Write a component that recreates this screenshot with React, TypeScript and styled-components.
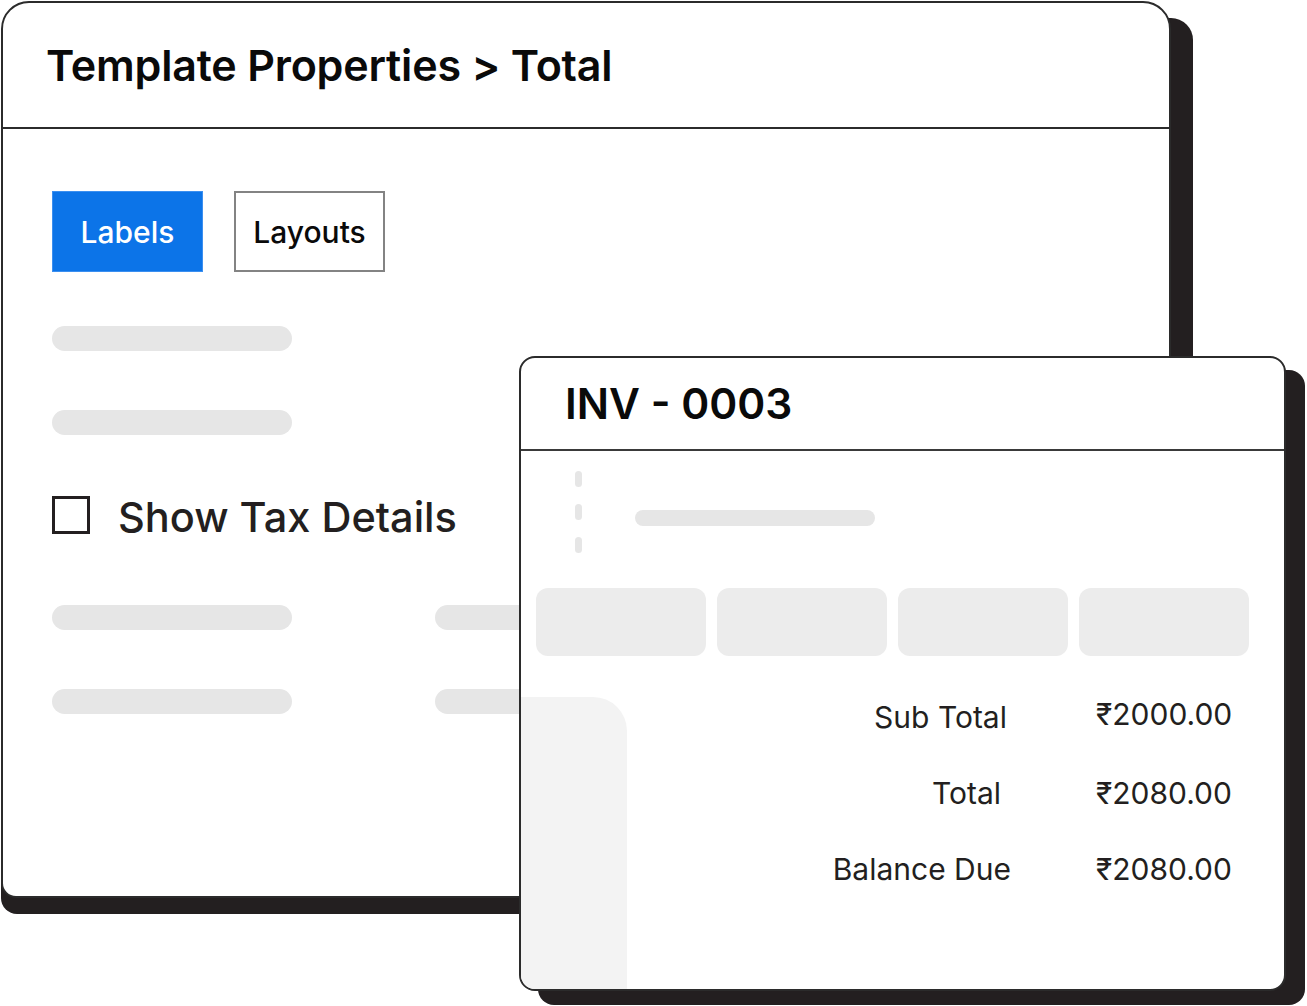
import React from 'react';
import styled, { createGlobalStyle } from 'styled-components';

const GlobalStyle = createGlobalStyle`
  html, body {
    margin: 0;
    padding: 0;
    background: #ffffff;
  }
  body {
    font-family: Inter, "Noto Sans", "DejaVu Sans", sans-serif;
    color: #231f20;
  }
  * {
    box-sizing: border-box;
  }
`;

const INK = '#231f20';

const Stage = styled.div`
  position: relative;
  z-index: 0;
  width: 1307px;
  height: 1006px;
  overflow: hidden;
`;

const BackCard = styled.section`
  position: relative;
  margin: 1px 0 0 1px;
  width: 1170px;
  height: 897px;
  display: flex;
  flex-direction: column;
  background: #ffffff;
  border: 2px solid #2b2b2b;
  border-radius: 28px 28px 15px 15px;

  /* the offset dark slab behind the card */
  &::before {
    content: '';
    position: absolute;
    left: -2px;
    top: 15px;
    right: -24px;
    bottom: -18px;
    background: ${INK};
    border-radius: 22px 22px 16px 16px;
    z-index: -1;
  }
`;

const BackHeader = styled.header`
  height: 126px;
  flex: none;
  display: flex;
  align-items: center;
  padding-left: 43px;
  border-bottom: 2px solid #2b2b2b;
`;

const BackTitle = styled.h1`
  margin: 0;
  font-size: 43px;
  font-weight: 600;
  letter-spacing: -0.2px;
  color: #0a0a0a;
`;

const BackBody = styled.div`
  display: flex;
  flex-direction: column;
  padding: 62px 0 0 49px;
`;

const Tabs = styled.div`
  display: flex;
  gap: 31px;
`;

const Tab = styled.button<{ $active?: boolean }>`
  width: 151px;
  height: 81px;
  display: flex;
  align-items: center;
  justify-content: center;
  font-family: inherit;
  font-size: 30px;
  font-weight: 500;
  background: ${(p) => (p.$active ? '#0c74e8' : '#ffffff')};
  color: ${(p) => (p.$active ? '#ffffff' : '#0a0a0a')};
  border: ${(p) => (p.$active ? '1px solid #3b8ff0' : '2px solid #838383')};
  padding: 0;
`;

const Skeleton = styled.div<{ $w: number; $h?: number; $top?: number }>`
  width: ${(p) => p.$w}px;
  height: ${(p) => p.$h ?? 25}px;
  margin-top: ${(p) => p.$top ?? 0}px;
  border-radius: 13px;
  background: #e6e6e6;
  flex: none;
`;

const SkeletonRow = styled.div<{ $top: number }>`
  display: flex;
  gap: 143px;
  margin-top: ${(p) => p.$top}px;
`;

const CheckRow = styled.label`
  display: flex;
  align-items: center;
  gap: 28px;
  margin-top: 61px;
  height: 38px;
`;

const CheckBox = styled.span`
  width: 38px;
  height: 38px;
  border: 3px solid ${INK};
  flex: none;
`;

const CheckText = styled.span`
  position: relative;
  top: 2px;
  font-size: 41.5px;
  font-weight: 500;
  color: ${INK};
`;

const FrontCard = styled.section`
  position: absolute;
  left: 519px;
  top: 356px;
  width: 767px;
  height: 635px;
  display: flex;
  flex-direction: column;
  background: #ffffff;
  border: 2px solid #2b2b2b;
  border-radius: 16px;
  box-shadow: 19px 14px 0 0 ${INK};
  overflow: hidden;
`;

const FrontHeader = styled.header`
  height: 93px;
  flex: none;
  display: flex;
  align-items: center;
  padding-left: 44px;
  border-bottom: 2px solid #3a3a3a;
`;

const FrontTitle = styled.h2`
  margin: 0;
  font-size: 42.5px;
  font-weight: 600;
  color: #0a0a0a;
`;

const MetaRow = styled.div`
  display: flex;
  align-items: center;
  padding: 20px 0 0 54px;
`;

const Dashes = styled.div`
  display: flex;
  flex-direction: column;
  gap: 17px;
`;

const Dash = styled.span`
  width: 7px;
  height: 16px;
  border-radius: 4px;
  background: #e6e6e6;
`;

const MetaBar = styled.div`
  width: 240px;
  height: 16px;
  margin: 12px 0 0 53px;
  border-radius: 8px;
  background: #e6e6e6;
`;

const ColumnBlocks = styled.div`
  display: grid;
  grid-template-columns: repeat(4, 170px);
  column-gap: 11px;
  padding: 35px 0 0 15px;
`;

const ColumnBlock = styled.div`
  height: 68px;
  border-radius: 12px;
  background: #ececec;
`;

const Lower = styled.div`
  flex: 1;
  display: flex;
  margin-top: 41px;
`;

const SideStrip = styled.div`
  width: 106px;
  flex: none;
  background: #f3f3f3;
  border-top-right-radius: 34px;
`;

const Totals = styled.div`
  display: grid;
  grid-template-columns: 380px 150px;
  column-gap: 89px;
  row-gap: 40px;
  align-content: start;
  padding-top: 2px;
  font-size: 30px;
  line-height: 36px;
  color: ${INK};
`;

const TotalLabel = styled.span<{ $shift?: number }>`
  justify-self: end;
  margin-right: ${(p) => p.$shift ?? 0}px;
`;

const TotalValue = styled.span<{ $lift?: number }>`
  position: relative;
  top: ${(p) => -(p.$lift ?? 0)}px;
`;

const totals = [
  { label: 'Sub Total', value: '₹2000.00', shift: 0, lift: 3 },
  { label: 'Total', value: '₹2080.00', shift: 6, lift: 0 },
  { label: 'Balance Due', value: '₹2080.00', shift: -4, lift: 0 },
];

export default function App() {
  return (
    <>
      <GlobalStyle />
      <Stage>
        <BackCard>
          <BackHeader>
            <BackTitle>Template Properties &gt; Total</BackTitle>
          </BackHeader>
          <BackBody>
            <Tabs>
              <Tab $active>Labels</Tab>
              <Tab>Layouts</Tab>
            </Tabs>
            <Skeleton $w={240} $top={54} />
            <Skeleton $w={240} $top={59} />
            <CheckRow>
              <CheckBox />
              <CheckText>Show Tax Details</CheckText>
            </CheckRow>
            <SkeletonRow $top={71}>
              <Skeleton $w={240} />
              <Skeleton $w={240} />
            </SkeletonRow>
            <SkeletonRow $top={59}>
              <Skeleton $w={240} />
              <Skeleton $w={240} />
            </SkeletonRow>
          </BackBody>
        </BackCard>

        <FrontCard>
          <FrontHeader>
            <FrontTitle>INV - 0003</FrontTitle>
          </FrontHeader>
          <MetaRow>
            <Dashes>
              <Dash />
              <Dash />
              <Dash />
            </Dashes>
            <MetaBar />
          </MetaRow>
          <ColumnBlocks>
            <ColumnBlock />
            <ColumnBlock />
            <ColumnBlock />
            <ColumnBlock />
          </ColumnBlocks>
          <Lower>
            <SideStrip />
            <Totals>
              {totals.map((t) => (
                <React.Fragment key={t.label}>
                  <TotalLabel $shift={t.shift}>{t.label}</TotalLabel>
                  <TotalValue $lift={t.lift}>{t.value}</TotalValue>
                </React.Fragment>
              ))}
            </Totals>
          </Lower>
        </FrontCard>
      </Stage>
    </>
  );
}
